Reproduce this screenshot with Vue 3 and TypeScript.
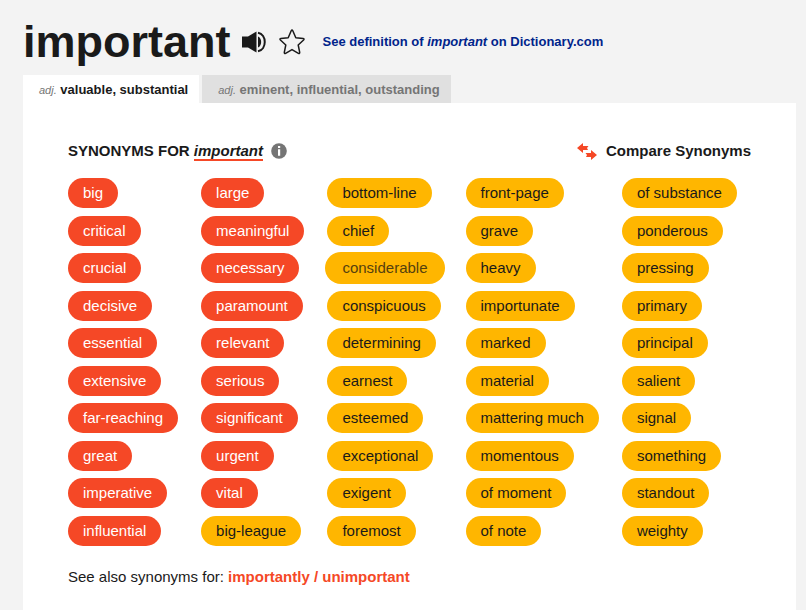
<script setup lang="ts">
import { ref } from 'vue'

type Strength = 'strong' | 'medium'

interface Synonym {
  word: string
  strength: Strength
  active?: boolean
}

const strong = (...words: string[]): Synonym[] => words.map((word) => ({ word, strength: 'strong' }))
const medium = (...words: string[]): Synonym[] => words.map((word) => ({ word, strength: 'medium' }))

const tabs = [
  { pos: 'adj.', label: 'valuable, substantial' },
  { pos: 'adj.', label: 'eminent, influential, outstanding' },
]
const selected = ref(0)

const columns: Synonym[][] = [
  strong('big', 'critical', 'crucial', 'decisive', 'essential', 'extensive', 'far-reaching', 'great', 'imperative', 'influential'),
  [
    ...strong('large', 'meaningful', 'necessary', 'paramount', 'relevant', 'serious', 'significant', 'urgent', 'vital'),
    ...medium('big-league'),
  ],
  [
    ...medium('bottom-line', 'chief'),
    { word: 'considerable', strength: 'medium', active: true },
    ...medium('conspicuous', 'determining', 'earnest', 'esteemed', 'exceptional', 'exigent', 'foremost'),
  ],
  medium('front-page', 'grave', 'heavy', 'importunate', 'marked', 'material', 'mattering much', 'momentous', 'of moment', 'of note'),
  medium('of substance', 'ponderous', 'pressing', 'primary', 'principal', 'salient', 'signal', 'something', 'standout', 'weighty'),
]
</script>

<template>
  <main class="page">
    <header class="entry">
      <h1>important</h1>
      <button class="icon-button speaker" type="button" aria-label="Play pronunciation">
        <svg width="24" height="22" viewBox="0 0 24 22">
          <path d="M0 5.500h6L14.500 .5v21L6 16.500H0z" fill="#1a1a1a" />
          <path d="M16 5.500c4.200 1.500 4.200 9.500 0 11z" fill="#1a1a1a" />
          <path d="M16 1.700c9 1.800 9 16.800 0 18.600" fill="none" stroke="#1a1a1a" stroke-width="2" />
        </svg>
      </button>
      <button class="icon-button star" type="button" aria-label="Save word">
        <svg width="26" height="26" viewBox="0 0 26 26">
          <path
            d="M12.200 1.800Q13 .4 13.800 1.800L16.800 8.700L24.200 9.500Q25.700 9.800 24.600 11L19.200 16L20.700 23.300Q20.800 25 19.400 24.300L13 20.600L6.600 24.300Q5.200 25 5.300 23.300L6.800 16L1.400 11Q.3 9.800 1.800 9.500L9.200 8.700z"
            fill="none" stroke="#1a1a1a" stroke-width="1.500" stroke-linejoin="round"
          />
        </svg>
      </button>
      <a class="definition" href="#definition">See definition of <em>important</em> on Dictionary.com</a>
    </header>

    <nav class="tabs" role="tablist">
      <button
        v-for="(tab, i) in tabs" :key="tab.label" type="button" role="tab"
        class="tab" :class="{ selected: selected === i }" :aria-selected="selected === i" @click="selected = i"
      ><em>{{ tab.pos }}</em> {{ tab.label }}</button>
    </nav>

    <section class="panel">
      <div class="panel-head">
        <h2>SYNONYMS FOR <em>important</em></h2>
        <button class="icon-button info" type="button" aria-label="About synonyms">
          <svg width="16" height="16" viewBox="0 0 16 16">
            <circle cx="8" cy="8" r="7.800" fill="#757575" />
            <path d="M7 3h2.200v2H7zM7 6.200h2.200v6.600H7z" fill="#fff" />
          </svg>
        </button>
        <a class="compare" href="#compare">
          <svg width="20" height="17" viewBox="0 0 20 17">
            <path d="M0 5L6 0v3H11.500L10 5L11 7H6v3z" fill="#f54826" />
            <path d="M20 12L14 7v3H8.500L10 12L9 14h5v3z" fill="#f54826" />
          </svg>
          Compare Synonyms
        </a>
      </div>

      <div class="synonyms">
        <ul v-for="(column, c) in columns" :key="c" class="column">
          <li v-for="item in column" :key="item.word">
            <a class="pill" :class="[item.strength, { active: item.active }]" :href="'#' + item.word">{{ item.word }}</a>
          </li>
        </ul>
      </div>

      <p class="see-also">
        See also synonyms for: <strong><a href="#importantly">importantly</a> / <a href="#unimportant">unimportant</a></strong>
      </p>
    </section>
  </main>
</template>

<style>
body {
  margin: 0;
  background: #f3f3f3;
}
</style>

<style scoped>
.page {
  display: flex;
  flex-direction: column;
  box-sizing: border-box;
  min-height: 100vh;
  padding: 0 10px 0 23px;
  font-family: "Liberation Sans", Arial, sans-serif;
  font-size: 15px;
  color: #1a1a1a;
}
a {
  color: inherit;
  text-decoration: none;
}
button {
  padding: 0;
  border: 0;
  background: none;
  font-family: inherit;
  cursor: pointer;
}
.entry {
  display: flex;
  align-items: center;
  padding: 8px 0 0;
}
h1 {
  margin: 0;
  font-size: 45px;
  line-height: 67px;
}
.icon-button {
  display: flex;
}
.speaker {
  margin-left: 11px;
}
.star {
  margin-left: 13px;
}
.definition {
  margin-left: 18px;
  font-size: 13px;
  font-weight: bold;
  color: #00248b;
}
.tabs {
  display: flex;
  gap: 3px;
}
.tab {
  padding: 2px 11px 0 16px;
  background: #e0e0e0;
  color: #757575;
  font-size: 13px;
  font-weight: bold;
  line-height: 26px;
}
.tab.selected {
  background: #fff;
  color: #1a1a1a;
}
.tab em {
  font-size: 11px;
  font-weight: normal;
  color: #757575;
}
.panel {
  flex: 1;
  padding: 36px 45px 20px;
  background: #fff;
}
.panel-head {
  display: flex;
  align-items: center;
  margin-bottom: 15px;
  line-height: 24px;
}
h2 {
  margin: 0;
  font-size: 15px;
}
h2 em {
  border-bottom: 2px solid #f54826;
}
.info {
  margin-left: 8px;
}
.compare {
  display: flex;
  align-items: center;
  gap: 9px;
  margin-left: auto;
  font-weight: bold;
}
.synonyms {
  display: flex;
  gap: 23px;
}
.column {
  display: grid;
  grid-template-rows: repeat(10, 1fr);
  min-height: 375px;
  margin: 0;
  padding: 0;
  list-style: none;
}
.column li {
  display: flex;
  align-items: flex-start;
}
.pill {
  padding: 0 15px;
  border-radius: 16px;
  line-height: 30px;
  white-space: nowrap;
}
.strong {
  background: #f54826;
  color: #fff;
}
.medium {
  background: #ffb600;
}
.active {
  margin: -1px -2px;
  padding: 0 17px;
  line-height: 32px;
  color: #55410f;
}
.see-also {
  margin: 12px 0 0;
  line-height: 24px;
}
.see-also strong {
  color: #f54826;
}
</style>
